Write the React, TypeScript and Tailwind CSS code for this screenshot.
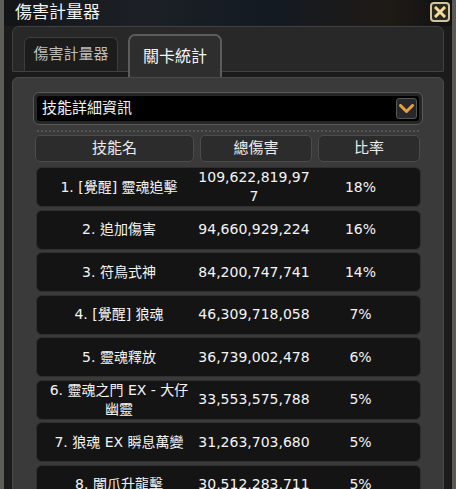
import React from "react";

const rows: [string, string, string][] = [
  ["1. [覺醒] 靈魂追擊", "109,622,819,977", "18%"],
  ["2. 追加傷害", "94,660,929,224", "16%"],
  ["3. 符鳥式神", "84,200,747,741", "14%"],
  ["4. [覺醒] 狼魂", "46,309,718,058", "7%"],
  ["5. 靈魂釋放", "36,739,002,478", "6%"],
  ["6. 靈魂之門 EX - 大仔幽靈", "33,553,575,788", "5%"],
  ["7. 狼魂 EX 瞬息萬變", "31,263,703,680", "5%"],
  ["8. 闇爪升龍擊", "30,512,283,711", "5%"],
];

const font = { fontFamily: '"DejaVu Sans", "Noto Sans CJK TC", sans-serif' };

export default function App() {
  return (
    <div
      className="w-[456px] h-[489px] overflow-hidden bg-[#1b1b1b] border-l-[4px] border-r-[4px] border-l-[#5e5d57] border-r-[#5a5953] flex flex-col"
      style={font}
    >
      {/* title bar */}
      <div className="h-[26px] shrink-0 flex items-center justify-between pl-[11px] pr-[2px] bg-[linear-gradient(90deg,#121417_0%,#1c2026_30%,#141a22_60%,#1f1a16_85%,#121212_100%)]">
        <span className="text-[17px] text-[#f2f2f2] leading-none mt-[-2px]">傷害計量器</span>
        <div className="w-[20px] h-[20px] rounded-[4px] border-2 border-[#cfc3a0] bg-[#2a2620] flex items-center justify-center mt-[-2px]">
          <svg width="12" height="12" viewBox="0 0 12 12">
            <path d="M2 2 L10 10 M10 2 L2 10" stroke="#f3dc9a" strokeWidth="3" strokeLinecap="square" />
          </svg>
        </div>
      </div>

      <div className="flex-1 flex flex-col px-[8px]">
        {/* tab strip */}
        <div className="h-[46px] shrink-0 rounded-t-[7px] border border-[#414141] bg-[#282828] flex items-end pl-[11px] gap-[10px]">
          <div className="w-[94px] h-[34px] rounded-t-[6px] border border-b-0 border-[#3d3d3d] bg-[#1c1c1c] flex items-center justify-center text-[15px] text-[#bdbdbd]">
            傷害計量器
          </div>
          <div className="relative z-10 w-[94px] h-[43px] mb-[-6px] rounded-t-[7px] border-2 border-b-0 border-[#5c5c5c] bg-[#2e2e2e] flex items-center justify-center text-[16px] text-[#f4f4f4]">
            關卡統計
          </div>
        </div>

        {/* content panel */}
        <div className="flex-1 mt-[5px] rounded-t-[6px] border border-[#4a4a4a] bg-[#3a3a3a] px-[20px] pt-[14px]">
          {/* dropdown */}
          <div className="h-[33px] rounded-[6px] border border-[#5a5a5a] bg-[#262626] p-[3px]">
            <div className="h-full rounded-[3px] bg-black flex items-center justify-between pl-[5px] pr-[2px]">
              <span className="text-[15px] text-[#f2f2f2]">技能詳細資訊</span>
              <div className="w-[21px] h-[21px] rounded-[3px] border border-[#555] bg-[#26282b] flex items-center justify-center">
                <svg width="15" height="10" viewBox="0 0 15 10">
                  <path d="M1.5 1.5 L7.5 7.5 L13.5 1.5" fill="none" stroke="#e6a040" strokeWidth="3" strokeLinejoin="round" strokeLinecap="round" />
                </svg>
              </div>
            </div>
          </div>
          {/* dotted line */}
          <div className="mt-[5px] mx-[4px] border-t-2 border-dotted border-[#555]" />
          {/* header */}
          <div className="mt-[3px] ml-[2px] flex gap-[6px] h-[27px] text-[15px] text-[#ececec]">
            <div className="w-[159px] rounded-[5px] border border-[#4c4c4c] bg-[#2c2c2c] flex items-center justify-center">技能名</div>
            <div className="w-[112px] rounded-[5px] border border-[#4c4c4c] bg-[#2c2c2c] flex items-center justify-center">總傷害</div>
            <div className="w-[102px] rounded-[5px] border border-[#4c4c4c] bg-[#2c2c2c] flex items-center justify-center">比率</div>
          </div>
          {/* rows */}
          <div className="mt-[5px] flex flex-col gap-[2.5px] pl-[3px] pr-[2px]">
            {rows.map((r, i) => (
              <div
                key={i}
                className="h-[40px] shrink-0 rounded-[6px] border border-[#2f2f2f] bg-[#141414] flex items-center pl-[8px] pr-[8px] text-[14px] leading-[19px] text-[#f4f4f4]"
              >
                <div className="w-[148px] text-center">{r[0]}</div>
                <div className="w-[116px] ml-[3px] text-center break-all">{r[1]}</div>
                <div className="w-[97px] text-center">{r[2]}</div>
              </div>
            ))}
          </div>
        </div>
      </div>
    </div>
  );
}
